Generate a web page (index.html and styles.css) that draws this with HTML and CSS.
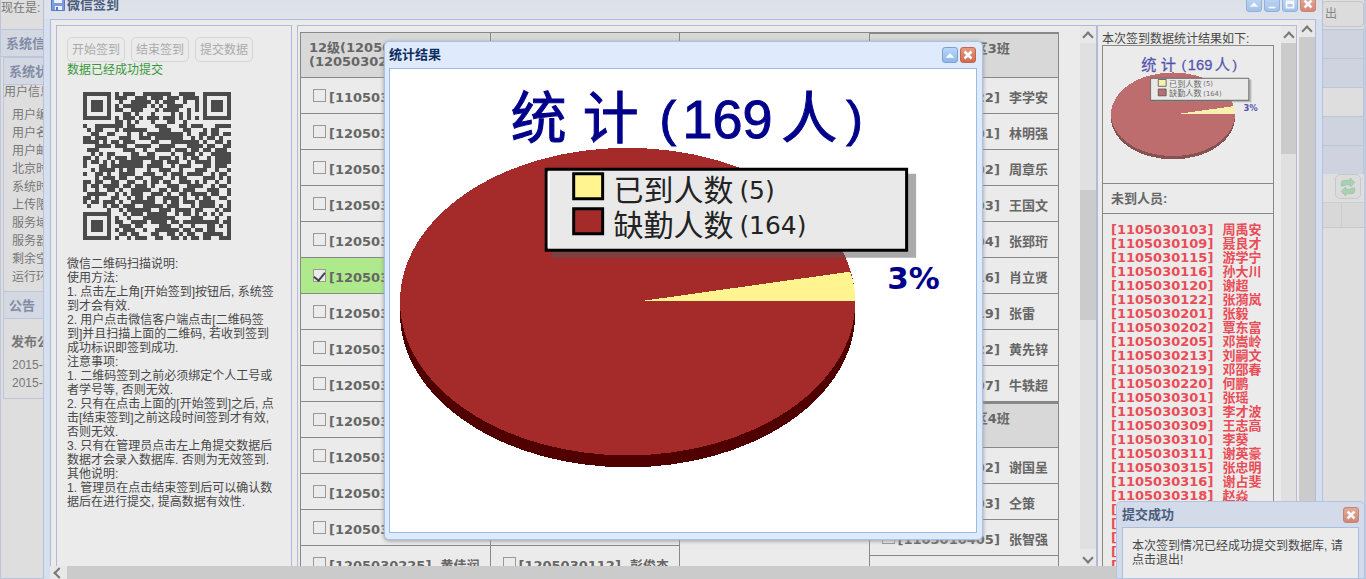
FILE: index.html
```
<!DOCTYPE html>
<html lang="zh-CN">
<head>
<meta charset="utf-8">
<title>微信签到</title>
<link rel="stylesheet" href="styles.css">
</head>
<body>
<div class="desktop">
  <aside class="side">
    <p class="now">现在是:</p>
    <h2 class="side-head">系统信息</h2>
    <div class="side-box">
      <h3 class="side-head">系统状态</h3>
      <p class="side-sub">用户信息</p>
      <ul class="side-list">
        <li>用户编号</li><li>用户名称</li><li>用户邮箱</li><li>北京时间</li><li>系统时间</li><li>上传限制</li><li>服务域名</li><li>服务器名</li><li>剩余空间</li><li>运行环境</li>
      </ul>
      <h3 class="side-head notice">公告</h3>
      <h4 class="pub">发布公告</h4>
      <ul class="side-list dates"><li>2015-04</li><li>2015-04</li></ul>
    </div>
  </aside>
  <aside class="tools">
    <button class="exit">出</button>
    <div class="bar"></div><div class="bar"></div><div class="bar pale"></div><div class="bar"></div><div class="bar"></div>
    <div class="tool-row">
      <button class="refresh" aria-label="刷新"><svg viewBox="0 0 16 16" width="18" height="18"><path d="M2 7V5q0-3 3-3h5V0l4 4-4 4V6H6L5 7zM14 9v2q0 3-3 3H6v2l-4-4 4-4v2h4l1-1z" fill="#a9d1b1" stroke="#93bd9c" stroke-width=".6"/></svg></button>
    </div>
    <div class="tool-grid"></div>
  </aside>
</div>

<main class="window">
  <header class="win-head">
    <svg class="disk" viewBox="0 0 14 14" width="14" height="14"><path d="M.5.5h12l1 1v12H.5z" fill="#7c9ce0" stroke="#5778c4"/><path d="M3 1h8v5H3zM4 9h7v4H4z" fill="#eef2fa"/><path d="M5 10h2v3H5z" fill="#5778c4"/></svg>
    <h1>微信签到</h1>
    <div class="win-tools">
      <button class="tool" aria-label="收起"><svg viewBox="0 0 16 16"><path d="M3 11l5-5 5 5z"/></svg></button>
      <button class="tool" aria-label="最小化"><svg viewBox="0 0 16 16"><path d="M4 11h8v2H4z"/></svg></button>
      <button class="tool" aria-label="最大化"><svg viewBox="0 0 16 16"><path d="M3 4h10v9H3zM5 8v3h6V8z" fill-rule="evenodd"/></svg></button>
      <button class="tool close" aria-label="关闭"><svg viewBox="0 0 16 16"><path d="M4 4l8 8M12 4l-8 8" class="x"/></svg></button>
    </div>
  </header>
  <div class="win-body">
    <div class="panes">
      <section class="guide">
        <div class="actions"><button disabled>开始签到</button><button disabled>结束签到</button><button disabled>提交数据</button></div>
        <p class="ok">数据已经成功提交</p>
        <svg class="qr" id="qr" viewBox="0 0 37 37" role="img" aria-label="签到二维码" shape-rendering="crispEdges"></svg>
        <p class="help">微信二维码扫描说明:<br>使用方法:<br>1. 点击左上角[开始签到]按钮后, 系统签<br>到才会有效.<br>2. 用户点击微信客户端点击[二维码签<br>到]并且扫描上面的二维码, 若收到签到<br>成功标识即签到成功.<br>注意事项:<br>1. 二维码签到之前必须绑定个人工号或<br>者学号等, 否则无效.<br>2. 只有在点击上面的[开始签到]之后, 点<br>击[结束签到]之前这段时间签到才有效,<br>否则无效.<br>3. 只有在管理员点击左上角提交数据后<br>数据才会录入数据库. 否则为无效签到.<br>其他说明:<br>1. 管理员在点击结束签到后可以确认数<br>据后在进行提交, 提高数据有效性.</p>
      </section>
      <section class="roster">
        <div class="classes" id="classes"></div>
        <div class="scroll"><span class="up"></span><span class="thumb mid"></span><span class="down"></span></div>
      </section>
      <section class="result">
        <div class="result-main">
          <p class="result-title">本次签到数据统计结果如下:</p>
          <div class="box">
            <div class="mini"><svg viewBox="390 69 587 464" role="img" aria-label="统计"><use href="#chart"/></svg></div>
            <h2>未到人员:</h2>
            <ul class="absent">
              <li>[1105030103]  周禹安</li><li>[1105030109]  聂良才</li><li>[1105030115]  游学宁</li><li>[1105030116]  孙大川</li><li>[1105030120]  谢超</li><li>[1105030122]  张漪岚</li><li>[1105030201]  张毅</li><li>[1105030202]  覃东富</li><li>[1105030205]  邓嵩岭</li><li>[1105030213]  刘嗣文</li><li>[1105030219]  邓邵春</li><li>[1105030220]  何鹏</li><li>[1105030301]  张瑶</li><li>[1105030303]  李才波</li><li>[1105030309]  王志高</li><li>[1105030310]  李葵</li><li>[1105030311]  谢英豪</li><li>[1105030315]  张忠明</li><li>[1105030316]  谢占斐</li><li>[1105030318]  赵焱</li><li>[1105030319]</li><li>[1105030320]</li><li>[1105030321]</li><li>[1105030322]</li><li>[1105030323]</li>
            </ul>
          </div>
        </div>
        <div class="scroll"><span class="up"></span><span class="thumb top"></span></div>
      </section>
    </div>
    <div class="scroll outer"><span class="up"></span><span class="thumb all"></span></div>
  </div>
  <div class="hscroll"><span class="left"></span><span class="hthumb"></span></div>
</main>

<section class="toast">
  <header><h2>提交成功</h2><button class="tool close" aria-label="关闭提示"><svg viewBox="0 0 16 16"><path d="M4 4l8 8M12 4l-8 8" class="x"/></svg></button></header>
  <p>本次签到情况已经成功提交到数据库, 请<br>点击退出!</p>
</section>

<section class="dialog" role="dialog" aria-labelledby="dlg">
  <header><h2 id="dlg">统计结果</h2>
    <button class="tool" aria-label="收起结果"><svg viewBox="0 0 16 16"><path d="M3 11l5-5 5 5z"/></svg></button>
    <button class="tool close" aria-label="关闭结果"><svg viewBox="0 0 16 16"><path d="M4 4l8 8M12 4l-8 8" class="x"/></svg></button>
  </header>
  <div class="dialog-body">
    <svg viewBox="390 69 587 464" role="img" aria-label="统计(169人)">
      <g id="chart">
        <path d="M400 302v12a228 154 0 0 0 456 0v-12z" fill="#500000" shape-rendering="crispEdges"/>
        <ellipse cx="628" cy="302" rx="228" ry="154" fill="#a52a2a" shape-rendering="crispEdges"/>
        <path d="M645 301L851 272Q856 286 856 301z" fill="#fff48f" shape-rendering="crispEdges"/>
        <g fill="#00008b" class="chart-title">
          <text x="511" y="138">统</text><text x="583" y="138">计</text><text x="660" y="136" class="thin">(</text><text x="683" y="138" class="latin">169</text><text x="782" y="138">人</text><text x="847" y="136" class="thin">)</text>
        </g>
        <path d="M552 174H917V258H552z" fill="#555" fill-opacity=".5"/>
        <path d="M546.500 169.500H907.500V250.500H546.500z" fill="#e9e9e9" stroke="#000" stroke-width="3"/>
        <path d="M549 248V172" stroke="#fff" stroke-width="2" fill="none"/>
        <path d="M574 174H603V199H574z" fill="#fff48f" stroke="#000" stroke-width="3"/>
        <path d="M574 209H603V234H574z" fill="#a52a2a" stroke="#000" stroke-width="3"/>
        <g fill="#222" class="legend">
          <text x="614" y="201">已到人数</text><text x="740" y="199" class="num">(5)</text>
          <text x="614" y="236">缺勤人数</text><text x="740" y="234" class="num">(164)</text>
        </g>
        <text x="888" y="289" fill="#00008b" class="pct">3%</text>
      </g>
    </svg>
  </div>
</section>
<script src="script.js"></script>
</body>
</html>
```
FILE: styles.css
```
* { box-sizing: border-box; }
html, body { height: 100%; }
body {
  margin: 0; overflow: hidden; position: relative; background: #dedede; color: #484848;
  font: 12px/14px "Liberation Sans", "Noto Sans CJK SC", sans-serif;
}
h1, h2, h3, h4, p, ul { margin: 0; padding: 0; font-size: 12px; }
ul { list-style: none; }
button { font: inherit; padding: 0; }
.desktop { display: flex; justify-content: space-between; height: 100%; }
.side { width: 44px; overflow: hidden; white-space: nowrap; color: #777; border: 1px solid #bdc6d9; border-top: 0; }
.now { height: 29px; padding-top: 1px; }
.side-head { height: 28px; line-height: 27px; padding-left: 5px; font-size: 13px; color: #828da5; background: #d3d8e2; border: 1px solid #bcc5d9; border-width: 1px 0; }
.side-box { margin-left: 2px; border-left: 1px solid #bcc5d9; border-bottom: 1px solid #bcc5d9; height: 342px; }
.side-sub { height: 21px; line-height: 14px; }
.side-list li { height: 18px; line-height: 18px; padding-left: 8px; }
.notice { margin-top: 5px; }
.pub { padding: 16px 0 7px 7px; font-size: 13px; }
.tools { width: 44px; padding-top: 1px; border-right: 2px solid #bfcbdf; }
.exit { display: block; width: 100%; height: 26px; margin-bottom: 2px; text-align: left; padding-left: 2px; color: #888; background: #dcdcdc; border: 1px solid #c6c6c6; border-radius: 4px; }
.bar { height: 29px; background: #ced3df; border: 1px solid #bcc6d9; border-bottom: 0; }
.pale { background: #dedede; }
.tool-row { height: 29px; padding: 0 3px; border-bottom: 1px solid #cecece; display: flex; justify-content: flex-end; }
.refresh { width: 26px; height: 25px; background: #dcdcdc; border: 1px solid #c8c8c8; border-radius: 5px; display: grid; place-items: center; }
.tool-grid { height: 25px; border-bottom: 1px solid #c8c8c8; background: linear-gradient(90deg, transparent 19px, #cecece 19px, #cecece 20px, transparent 20px) #d8d8d8; }

.window { position: absolute; inset: 0 43px 0 43px; display: flex; flex-direction: column; background: #d5dfef; border: 1px solid #b3c3dd; border-width: 0 1px; }
.win-head { height: 19px; flex: none; overflow: hidden; display: flex; padding: 0 7px; background: linear-gradient(#dce0e7, #dfe4ed); }
.disk { margin-top: -3px; }
.win-head h1 { flex: 1; padding-left: 2px; font-size: 13px; line-height: 10px; color: #4a5b7c; }
.win-tools { display: flex; gap: 2px; margin: -4px -1px 0 0; }
.tool { width: 16px; height: 16px; border: 1px solid #7ba0d2; border-radius: 3px; background: linear-gradient(#b9d6fa, #8fb6ea); }
.tool svg { display: block; width: 14px; height: 14px; fill: #fff; }
.tool .x { stroke: #fff; stroke-width: 3; }
.close { background: linear-gradient(#e79a80, #d3694e); border-color: #c1654e; }
.win-tools .tool, .toast .tool { opacity: .75; }
.win-body { flex: 1; min-height: 0; display: flex; margin: 0 6px; background: #ebebeb; border: 1px solid #b1bbd8; border-bottom: 0; }
.panes { flex: 1; min-width: 0; display: flex; padding: 5px 0 0 5px; gap: 5px; }
.guide, .roster, .result { background: #ebebeb; border: 1px solid #b1bbd8; border-bottom: 0; overflow: hidden; }
.guide { flex: 0 0 236px; padding: 11px 0 0 10px; }
.actions { display: flex; gap: 6px; }
.actions button { width: 58px; height: 25px; color: #aaa; background: #ebebeb; border: 1px solid #d4d4d4; border-radius: 5px; }
.ok { color: #399939; padding-top: 1px; margin-bottom: 15px; }
.qr { display: block; width: 148px; height: 148px; margin-left: 16px; fill: #4b4b4b; }
.help { margin-top: 17px; white-space: nowrap; }
.roster { flex: 1; display: flex; padding-left: 2px; }
.classes { flex: 1; min-width: 0; display: flex; margin-right: 21px; height: 100%; overflow: hidden; }
.class { flex: 1; min-width: 0; margin-top: 6px; color: #666; font: bold 13px/14px "DejaVu Sans", "Noto Sans CJK SC", sans-serif; border-right: 1px solid #888; height: 700px; }
.class:first-child { border-left: 1px solid #888; }
.class h2 { height: 46px; padding: 8px 8px 0; font-size: 13px; background: #d8d8d8; border: 1px solid #888; border-width: 1px 0; white-space: nowrap; }
.class h2.heavy { border-top-width: 2px; }
.class label { display: flex; align-items: center; height: 36px; padding: 4px 0 0 12px; border-bottom: 1px solid #888; white-space: pre; }
.class label.on { background: #aeea8c; }
.class input { appearance: none; flex: none; display: grid; justify-content: center; width: 13px; height: 13px; margin: 0 3px 5px 0; border: 1px solid #999; background: #ebebeb; }
.class input:checked::before { content: ""; width: 5px; height: 9px; border: solid #444; border-width: 0 2px 2px 0; transform: rotate(40deg); }
.result { flex: 0 0 200px; display: flex; margin-left: -5px; margin-right: 2px; }
.result-main { flex: 1; padding: 6px 7px 0 4px; white-space: nowrap; }
.result-title { height: 13px; }
.box { border: 1px solid #888; height: 700px; }
.mini { height: 137px; padding: 5px; }
.mini svg { display: block; width: 160px; height: 126px; opacity: .65; }
.box h2 { height: 31px; padding: 8px; line-height: 14px; font-size: 13px; border: 1px solid #888; border-width: 1px 0; color: #666; }
.absent { padding: 9px 8px; color: #ea4c56; font: bold 13px/14px "DejaVu Sans", "Noto Sans CJK SC", sans-serif; }
.absent li { white-space: pre; }
.scroll { flex: 0 0 16px; display: flex; flex-direction: column; background: #e0e0e0; }
.up, .down { flex: none; height: 17px; background: #e8e8e8; display: grid; place-items: center; }
.up::before, .down::before, .left::before { content: ""; width: 6px; height: 6px; border: solid #777; border-width: 2px 0 0 2px; transform: translateY(2px) rotate(45deg); }
.down { margin-top: auto; }
.down::before { transform: rotate(225deg); }
.thumb { background: #cbcbcb; }
.mid { height: 130px; margin-top: 147px; }
.top { height: 111px; }
.all { flex: 1; }
.hscroll { height: 13px; flex: none; margin: 0 6px; display: flex; background: #cbcbcb; }
.left { width: 17px; background: #e8e8e8; display: grid; place-items: center; }
.left::before { transform: rotate(-45deg); }

.toast { position: absolute; right: 1px; bottom: 0; width: 249px; padding: 0 5px; background: #d3dbea; border: 1px solid #b1c5e3; border-radius: 5px 5px 0 0; }
.toast header { height: 25px; display: flex; align-items: center; justify-content: space-between; }
.toast h2 { font-size: 13px; color: #4a5b7c; }
.toast p { height: 51px; padding: 11px 9px; background: #ebebeb; border: 1px solid #a8c0de; border-bottom: 0; white-space: nowrap; }
.dialog { position: absolute; top: 41px; left: calc(50% - 299px); width: 599px; padding: 0 5px 6px 4px; border: 1px solid #a6c2ec; border-radius: 5px; background: #dfebfc; box-shadow: 0 1px 4px #999; }
.dialog header { height: 26px; display: flex; align-items: center; gap: 2px; padding-right: 1px; }
.dialog h2 { flex: 1; font-size: 13px; color: #0e2d5f; }
.dialog-body { background: #fff; border: 1px solid #99bbe8; }
.dialog-body svg { display: block; width: 100%; }
.chart-title { font: 400 56px "Noto Sans CJK SC", sans-serif; stroke: #00008b; stroke-width: 1px; }
.chart-title .latin { font: 54px "Liberation Sans", sans-serif; }
.chart-title .thin { font: 50px "Liberation Sans", sans-serif; }
.legend { font: 400 30px "Noto Sans CJK SC", sans-serif; }
.legend .num { font: 25px "DejaVu Sans", sans-serif; }
.pct { font: bold 31px "DejaVu Sans", sans-serif; }
```
FILE: script.js
```
const rows = [
"1111111010111001111111001111001111111","1000001011100111011101110111101000001","1011101001001111101011100100101011101","1011101010111111010101111000101011101","1011101011001110001011110010101011101","1000001000110100010000101010001000001","1111111010111010111011101010101111111",
"0000000011010100010001100100000000000","1001111111011000001110001101110001111","0101100010111111000111000110001011000","0011001100010010111111111010011011011","1101110001110011101111111001010110100","1111010110111000011000111111101001101","0001111011100111100111100011110110011","0111000000111001001111011101101101110","0010101100001100110000100111010011111","1101001011101111110111010101100101111","1011010101111110011101110010111101111","1000110111111110111100101110001101110","0010111101011000100111001000111001001",
"1001101001111001110010111011110010110","0001011101100110011100101100001110101","1101100110011001011011001110101001001","1011011110110111010001110011110010110","1001001101001111100110110111000111001","0111110010101110011101001101111011001","1101000110010110110011110100101100110","1011011101001111110010110111011110001","0100010110111001111101110001011110101",
"0000001001011111100111011110110001011","1111111000101110111110010110101010100","1000001010010001111111100001110001001","1011101011001111011110110111111111011","1011101001110110000111001001000110101","1011101010111001001111110110110110001","1000001001101100011001101011001111101","1111111010010111001100110101101100111"
];
const qr = document.getElementById("qr");
const path = document.createElementNS("http://www.w3.org/2000/svg", "path");
path.setAttribute("d", rows.map((r, y) => [...r].map((c, x) => c === "1" ? `M${x} ${y}h1v1h-1z` : "").join("")).join(""));
qr.append(path);

const students = (ids) => ids.map((s) => ({ text: s.replace("] ", "]  ") }));
const classes = [
  ["12级(12050302)<br>(12050302)2班", students(["[1105030222] 李强", "[1205030201] 王明", "[1205030202] 张华", "[1205030203] 刘伟", "[1205030204] 陈超", "[1205030205] 杨帆", "[1205030206] 周杰", "[1205030207] 吴磊", "[1205030208] 郑浩", "[1205030210] 孙鹏", "[1205030211] 何勇", "[1205030212] 罗斌", "[1205030213] 谢军", "[1205030225] 黄佳润"])],
  ["", students([...Array(13).fill(""), "[1205030112] 彭俊杰"])],
  ["", students(Array(12).fill(""))],
  ["12级(120503)区3班", students(["[1205030322] 李学安", "[1205030301] 林明强", "[1205030302] 周章乐", "[1205030303] 王国文", "[1205030304] 张郅珩", "[1205030316] 肖立贤", "[1205030319] 张雷", "[1205030322] 黄先锌", "[1205030307] 牛轶超", "#12级(120504)区4班", "[1205030402] 谢国呈", "[1205030403] 仝策", "[1105010405] 张智强", ""])]
];
document.getElementById("classes").innerHTML = classes.map(([head, list], col) =>
  `<div class="class"><h2${col === 3 ? ' class="heavy"' : ""}>${head}</h2>` + list.map(({ text }, i) => {
    if (text[0] === "#") return `<h2 class="heavy">${text.slice(1)}</h2>`;
    const on = col === 0 && i === 5;
    return text ? `<label${on ? ' class="on"' : ""}><input type="checkbox"${on ? " checked" : ""}>${text}</label>` : "<label></label>";
  }).join("") + "</div>").join("");
```
